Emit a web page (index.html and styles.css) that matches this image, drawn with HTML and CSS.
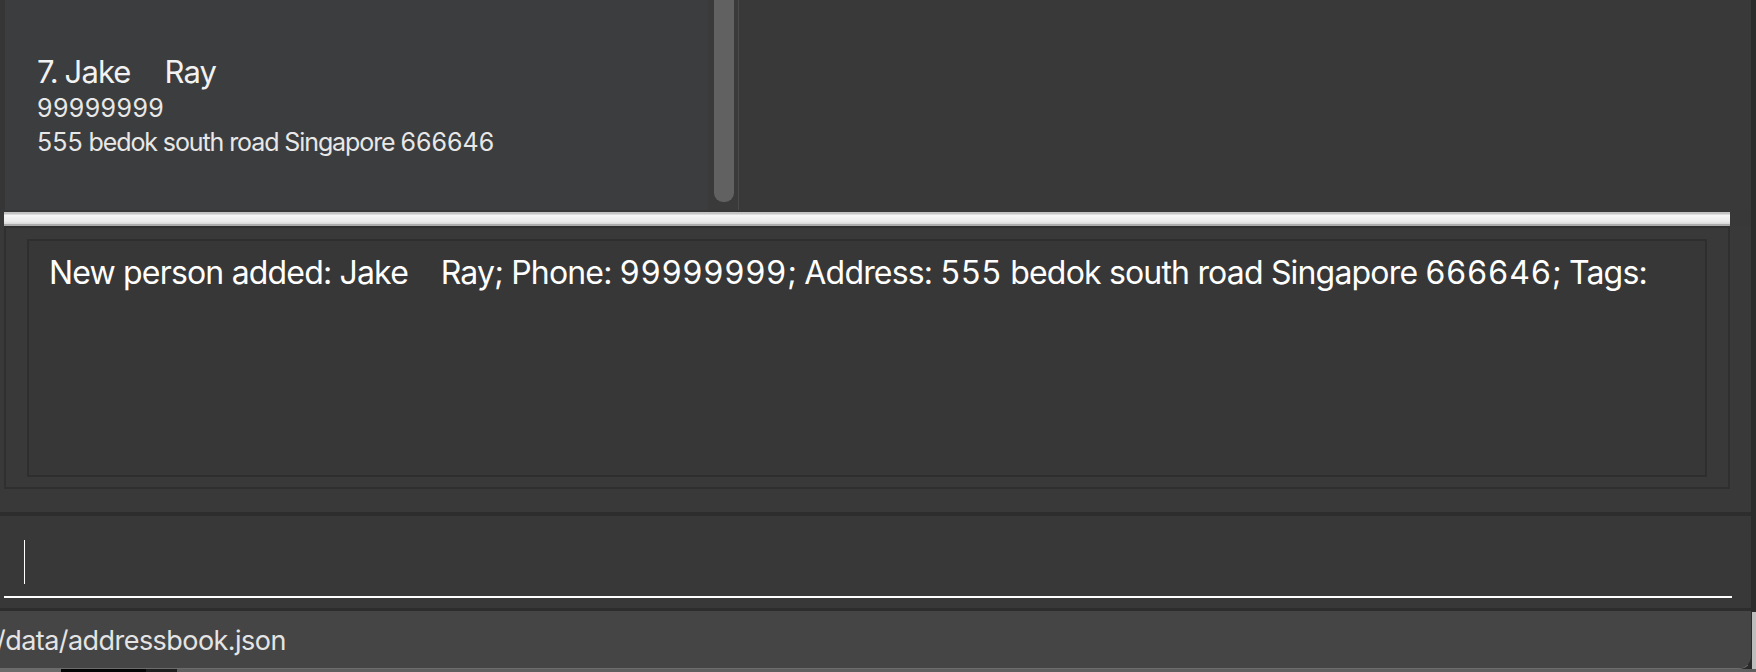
FILE: index.html
```html
<!DOCTYPE html>
<html lang="en">
<head>
<meta charset="utf-8">
<title>Address Book</title>
<link rel="stylesheet" href="styles.css">
</head>
<body>
<div class="screen">
  <div class="window">
    <div class="top-split">
      <div class="list-edge"></div>
      <div class="person-card">
        <div class="card-name">7. Jake     Ray</div>
        <div class="card-phone">99999999</div>
        <div class="card-address"><span class="num">555</span> bedok south road Singapore <span class="num">666646</span></div>
      </div>
      <div class="scroll-track"><div class="scroll-thumb"></div></div>
      <div class="pane-line"></div>
      <div class="detail-pane"></div>
    </div>
    <div class="divider"></div>
    <div class="result-section">
      <div class="result-outer">
        <div class="result-inner">
          <div class="result-text">New person added: Jake    Ray; Phone: <span class="num">99999999</span>; Address: <span class="num">555</span> bedok south road Singapore <span class="num">666646</span>; Tags:</div>
        </div>
      </div>
    </div>
    <div class="command-section">
      <div class="command-field"><span class="caret"></span></div>
    </div>
    <div class="status-bar"><span class="status-text">/data/addressbook.json</span></div>
  </div>
  <div class="desk-right"></div>
</div>
<div class="desk-bottom">
  <div class="db db-a"></div>
  <div class="db db-b"></div>
  <div class="db db-c"></div>
  <div class="db db-d"></div>
</div>
</body>
</html>
```

FILE: styles.css
```css
html, body {
  margin: 0;
  padding: 0;
}
body {
  width: 1756px;
  height: 672px;
  overflow: hidden;
  background: #2a2a2a;
  font-family: Inter, "Noto Sans", "Liberation Sans", sans-serif;
}
.screen {
  display: flex;
  height: 669px;
}
.window {
  width: 1752px;
  height: 669px;
  background: #383838;
  display: flex;
  flex-direction: column;
  border-bottom-right-radius: 13px;
  border-right: 1px solid #2b2b2b;
  border-bottom: 1px solid #6c6c6c;
  box-sizing: border-box;
  overflow: hidden;
}
.desk-right {
  width: 4px;
  background: linear-gradient(#2c2c2c 0, #2c2c2c 612px, #bdbdbd 612px);
}
.desk-bottom {
  display: flex;
  height: 3px;
  background: #5d5d5d;
}
.db { height: 3px; }
.db-a { width: 61px; background: #6a6a6a; }
.db-b { width: 85px; background: #050505; }
.db-c { width: 31px; background: #1e1e1e; }
.db-d { flex: 1; background: #5e5e5e; }

/* top split */
.top-split {
  display: flex;
  height: 210px;
  flex: none;
}
.list-edge {
  width: 5px;
  background: #363636;
}
.person-card {
  width: 703px;
  background: #3c3d3f;
  box-sizing: border-box;
  padding: 52px 0 0 32px;
  color: #f2f2f2;
}
.card-name {
  font-size: 31px;
  line-height: 40px;
  letter-spacing: -0.9px;
  word-spacing: -1px;
  white-space: pre;
}
.card-phone {
  font-size: 25px;
  line-height: 32px;
  letter-spacing: 0.4px;
  color: #e8e8e8;
  white-space: pre;
}
.card-address {
  font-size: 25px;
  line-height: 32px;
  margin-top: 2px;
  letter-spacing: -1.1px;
  color: #e8e8e8;
  white-space: pre;
}
.card-address .num {
  letter-spacing: 0;
}
.scroll-track {
  width: 30px;
  background: #3a3a3a;
  box-sizing: border-box;
  padding: 0 4px 0 6px;
}
.scroll-thumb {
  height: 202px;
  background: #616161;
  border-radius: 0 0 9px 9px;
}
.pane-line {
  width: 1px;
  background: #4a4a4a;
}
.detail-pane {
  flex: 1;
  background: #393939;
  border-left: 1px solid #393939;
}

/* divider */
.divider {
  flex: none;
  height: 14px;
  width: 1726px;
  margin: 2px 0 0 4px;
  background: linear-gradient(#c4c4c4 0, #c4c4c4 2px, #f7f7f7 3px, #ececec 9px, #d8d8d8 12px, #ababab 12px, #ababab 14px);
}

/* result */
.result-section {
  flex: none;
  height: 286px;
  box-sizing: border-box;
  padding: 0 0 0 4px;
  background: #393939;
}
.result-outer {
  width: 1726px;
  height: 263px;
  box-sizing: border-box;
  border: 2px solid #2f2f2f;
  padding: 11px 21px 10px 21px;
  background: #393939;
}
.result-inner {
  height: 100%;
  box-sizing: border-box;
  border: 2px solid #2e2e2e;
  background: #373737;
  padding: 12px 0 0 20px;
}
.result-text {
  font-size: 32px;
  line-height: 40px;
  letter-spacing: -0.82px;
  color: #ffffff;
  white-space: pre;
}
.result-text .num {
  letter-spacing: 1.1px;
}

/* command */
.command-section {
  flex: none;
  height: 99px;
  box-sizing: border-box;
  border-top: 4px solid #2d2d2d;
  border-bottom: 3px solid #2d2d2d;
  background: #383838;
  padding: 0 0 0 4px;
}
.command-field {
  width: 1728px;
  height: 82px;
  box-sizing: border-box;
  border-bottom: 2px solid #ffffff;
  padding: 24px 0 0 20px;
}
.caret {
  display: block;
  width: 1px;
  height: 44px;
  background: #ffffff;
}

/* status */
.status-bar {
  flex: 1;
  background: #454545;
  padding: 13px 0 0 0;
  box-sizing: border-box;
  overflow: hidden;
}
.status-text {
  display: block;
  margin-left: -4px;
  font-size: 27px;
  line-height: 34px;
  letter-spacing: -0.55px;
  color: #e4e4e4;
  white-space: pre;
}
```
